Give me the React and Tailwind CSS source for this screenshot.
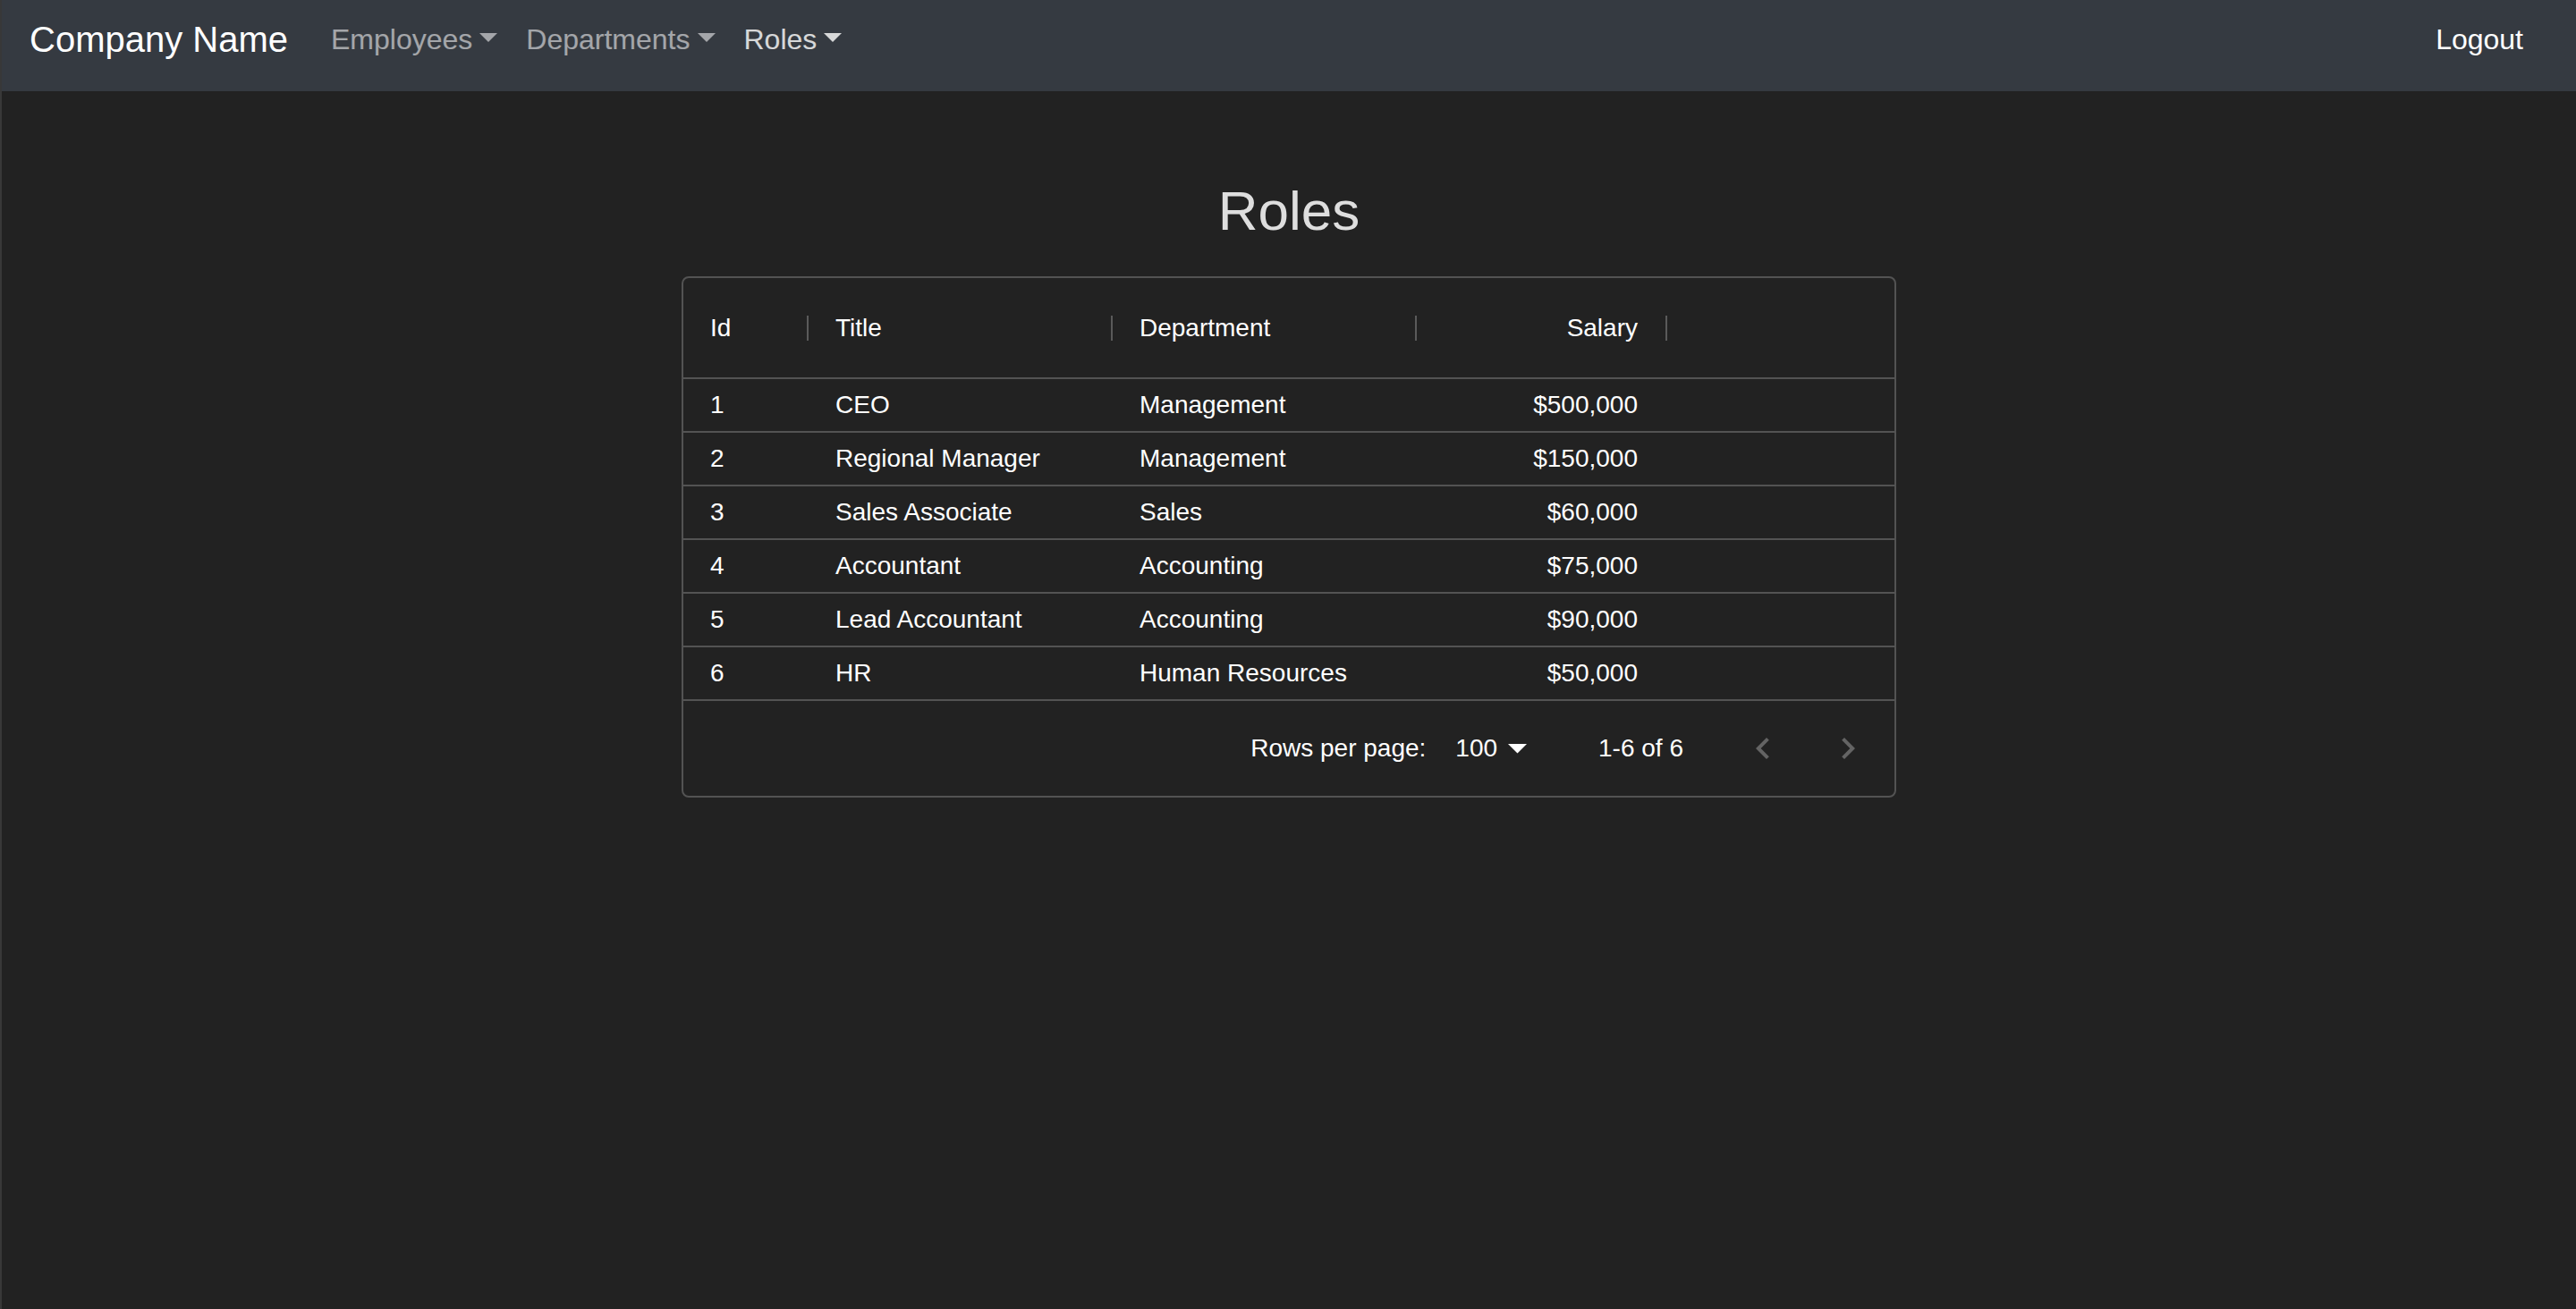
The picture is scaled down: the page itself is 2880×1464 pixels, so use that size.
import React from "react";

const rows = [
  [1, "CEO", "Management", "$500,000"],
  [2, "Regional Manager", "Management", "$150,000"],
  [3, "Sales Associate", "Sales", "$60,000"],
  [4, "Accountant", "Accounting", "$75,000"],
  [5, "Lead Accountant", "Accounting", "$90,000"],
  [6, "HR", "Human Resources", "$50,000"],
];

function Caret() {
  return (
    <span className="inline-block ml-[8px] align-[0.255em] border-t-[10px] border-x-[10px] border-b-0 border-x-transparent border-t-current" />
  );
}

function Sep() {
  return <div className="w-[2px] h-[28px] bg-[#5a5a5a] shrink-0" />;
}

export default function App() {
  return (
    <div
      className="min-h-[1464px] bg-[#222222] border-l-2 border-white/10 text-white"
      style={{ fontFamily: '"Liberation Sans", Arial, sans-serif' }}
    >
      <nav className="h-[102px] bg-[#353a41] flex items-center pb-[14px] pl-[31px] pr-[43px]">
        <span className="text-[40px] leading-[60px] text-white mr-[32px]">Company Name</span>
        <span className="text-[32px] leading-[48px] px-[16px] text-white/55">
          Employees
          <Caret />
        </span>
        <span className="text-[32px] leading-[48px] px-[16px] text-white/55">
          Departments
          <Caret />
        </span>
        <span className="text-[32px] leading-[48px] px-[16px] text-white/80">
          Roles
          <Caret />
        </span>
        <span className="ml-auto text-[32px] leading-[48px] px-[16px] text-white">Logout</span>
      </nav>

      <main className="pt-[97px]">
        <h1 className="text-center text-[62px] leading-[74px] text-[#dedede] mb-[36px]">Roles</h1>

        <div className="w-[1358px] mx-auto border-2 border-[#535353] rounded-[8px] text-[28px]">
          <div className="flex h-[113px] items-center border-b-2 border-[#535353]">
            <div className="w-[140px] flex items-center">
              <div className="flex-1 pl-[30px]">Id</div>
              <Sep />
            </div>
            <div className="w-[340px] flex items-center">
              <div className="flex-1 pl-[30px]">Title</div>
              <Sep />
            </div>
            <div className="w-[340px] flex items-center">
              <div className="flex-1 pl-[30px]">Department</div>
              <Sep />
            </div>
            <div className="w-[280px] flex items-center">
              <div className="flex-1 text-right pr-[31px]">Salary</div>
              <Sep />
            </div>
            <div className="flex-1" />
          </div>

          {rows.map((r) => (
            <div key={r[0]} className="flex h-[60px] items-center border-b-2 border-[#535353]">
              <div className="w-[140px] pl-[30px]">{r[0]}</div>
              <div className="w-[340px] pl-[30px]">{r[1]}</div>
              <div className="w-[340px] pl-[30px]">{r[2]}</div>
              <div className="w-[280px] text-right pr-[33px]">{r[3]}</div>
              <div className="flex-1" />
            </div>
          ))}

          <div className="h-[106px] flex items-center justify-end pr-[28px]">
            <span>Rows per page:</span>
            <span className="ml-[33px]">100</span>
            <svg className="ml-[12px]" width="21" height="11" viewBox="0 0 21 11">
              <path d="M0 0 L10.5 10.5 L21 0 Z" fill="#ffffff" />
            </svg>
            <span className="ml-[80px]">1-6 of 6</span>
            <svg className="ml-[65px]" width="48" height="48" viewBox="0 0 24 24">
              <path d="M15.41 16.59 10.83 12l4.58-4.59L14 6l-6 6 6 6 1.41-1.41z" fill="#646464" />
            </svg>
            <svg className="ml-[47px]" width="48" height="48" viewBox="0 0 24 24">
              <path d="M8.59 16.59 13.17 12 8.59 7.41 10 6l6 6-6 6-1.41-1.41z" fill="#646464" />
            </svg>
          </div>
        </div>
      </main>
    </div>
  );
}
